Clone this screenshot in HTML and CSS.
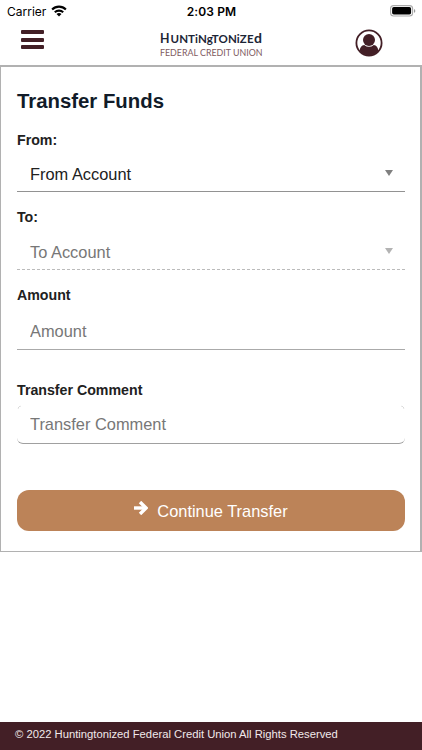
FILE: index.html
```html
<!DOCTYPE html>
<html lang="en">

<head>
    <meta charset="utf-8">
    <meta name="viewport" content="width=device-width, initial-scale=1">
    <title>Transfer Funds</title>
    <link rel="stylesheet" href="styles.css">
</head>

<body>
    <!-- Status bar -->
    <div class="status">
        <div class="carrier">
            <span>Carrier</span>
            <svg width="16" height="12" viewBox="0 0 16 12" fill="none" stroke="#000" stroke-width="2.1">
                <path d="M1.1 4.5a9.8 9.8 0 0 1 13.8 0" />
                <path d="M3.8 7.3a6 6 0 0 1 8.4 0" />
                <path d="M8 11.6L5.5 9.1a3.6 3.6 0 0 1 5 0z" fill="#000" stroke="none" />
            </svg>
        </div>
        <div class="time">2:03 PM</div>
        <div class="battery">
            <svg width="26" height="12" viewBox="0 0 26 12">
                <rect x="0.6" y="0.6" width="22" height="10.4" rx="3" fill="#fff" stroke="#aaa" stroke-width="1.1" />
                <rect x="2.1" y="2.1" width="19" height="7.4" rx="1.7" />
                <path d="M24 4v3.8q1.3-.5 1.3-1.9T24 4z" fill="#999" />
            </svg>
        </div>
    </div>

    <!-- Header -->
    <header class="header">
        <button class="menu" aria-label="Menu">
            <span></span>
            <span></span>
            <span></span>
        </button>
        <svg class="logo" width="104" height="30" viewBox="0 0 104 30">
            <text class="logo-name" x="0" y="13.5"><tspan class="big" textLength="9.5" lengthAdjust="spacingAndGlyphs">H</tspan><tspan x="10.5" textLength="83" lengthAdjust="spacing">UNTiNgTONiZE</tspan><tspan class="tall" x="94">d</tspan></text>
            <text class="logo-sub" x="0" y="27" textLength="102.5" lengthAdjust="spacingAndGlyphs">FEDERAL CREDIT UNION</text>
        </svg>
        <button class="user" aria-label="Account">
            <svg width="28" height="28" viewBox="0 0 28 28">
                <circle cx="14" cy="14" r="12.6" fill="#fff" stroke="#431f26" stroke-width="1.8" />
                <circle cx="14" cy="11" r="6" fill="#431f26" />
                <path d="M4.6 22C5 18 6.6 16.3 9.2 15.9q4.8 3.9 9.6 0c2.6.4 4.2 2.1 4.6 6.1a12.5 12.5 0 0 1-18.8 0z" fill="#431f26" />
            </svg>
        </button>
    </header>

    <!-- Transfer Form -->
    <form class="card">
        <h1>Transfer Funds</h1>

        <label for="from">From:</label>
        <div class="select" id="from">
            <span>From Account</span>
            <i class="arrow"></i>
        </div>

        <label for="to">To:</label>
        <div class="select disabled" id="to">
            <span>To Account</span>
            <i class="arrow"></i>
        </div>

        <label for="amount">Amount</label>
        <input class="amount" type="text" id="amount" placeholder="Amount">

        <label for="comment">Transfer Comment</label>
        <input class="comment" type="text" id="comment" placeholder="Transfer Comment">

        <button type="submit" class="submit">
            <svg width="14" height="14" viewBox="0 0 14 14" fill="none" stroke="#fff" stroke-width="3.4">
                <path d="M0 7h11.5" />
                <path d="M6 1l6 6-6 6" />
            </svg>
            <span>Continue Transfer</span>
        </button>
    </form>

    <footer class="footer">© 2022 Huntingtonized Federal Credit Union All Rights Reserved</footer>
</body>

</html>
```
FILE: styles.css
```css
* {
    box-sizing: border-box;
}

body {
    font-family: "Liberation Sans", Arial, sans-serif;
    margin: 0;
    height: 100vh;
    display: flex;
    flex-direction: column;
    background-color: #fff;
    color: #212121;
    overflow: hidden;
}

button {
    font-family: inherit;
    background: none;
    border: none;
    padding: 0;
    cursor: pointer;
}

svg {
    display: block;
}

.status {
    display: grid;
    grid-template-columns: 1fr auto 1fr;
    align-items: center;
    height: 22px;
    padding: 0 6px 0 7px;
    font-family: Inter, sans-serif;
    font-size: 12px;
    color: #000;
}

.carrier {
    display: flex;
    align-items: center;
    gap: 5px;
}

.time {
    font-weight: 600;
    letter-spacing: 0.1px;
}

.battery {
    justify-self: end;
}

.header {
    display: flex;
    justify-content: space-between;
    height: 43px;
    padding: 7px 39px 0 21px;
}

.menu {
    display: flex;
    flex-direction: column;
    gap: 3.5px;
    width: 23px;
    padding-top: 1px;
}

.menu span {
    height: 4px;
    width: 23px;
    border-radius: 1px;
    background-color: #431f26;
}

.logo {
    overflow: visible;
    margin-left: 24px;
}

.logo-name {
    font-family: Lato, sans-serif;
    font-weight: 700;
    font-size: 11.5px;
    fill: #1c2536;
}

.logo-name .big,
.logo-name .tall {
    font-size: 14px;
}

.logo-sub {
    font-family: Lato, sans-serif;
    font-size: 10px;
    fill: #805b5f;
}

.user {
    align-self: flex-start;
}

.card {
    border: 1px solid #b1b1b1;
    border-width: 2px 2px 1px 1px;
    height: 487px;
    padding: 20px 15px 0 16px;
    display: flex;
    flex-direction: column;
}

h1 {
    margin: 0 0 16px;
    font-size: 20.35px;
    line-height: 28px;
    color: #111b29;
}

label {
    font-size: 14.2px;
    font-weight: bold;
    line-height: 18px;
}

.select {
    display: flex;
    justify-content: space-between;
    align-items: center;
    height: 43px;
    margin-bottom: 16px;
    padding: 8px 12px 0 13px;
    border-bottom: 1px solid #929292;
    font-size: 16.4px;
}

.arrow {
    margin-bottom: 3px;
    border: 4px solid transparent;
    border-top: 6px solid #808080;
    border-bottom: 0;
}

.select.disabled {
    height: 44px;
    padding-top: 9px;
    color: #777;
    border-bottom: 1px dashed #bbb;
}

.disabled .arrow {
    border-top-color: #b3b3b3;
}

input {
    width: 100%;
    border: 0 solid #a0a0a0;
    outline: none;
    padding: 0 13px;
    font-family: inherit;
    font-size: 16.4px;
    background: #fff;
}

input::placeholder {
    color: #777;
}

.amount {
    height: 46px;
    padding-top: 9px;
    border-bottom: 1px solid #aaa;
    margin-bottom: 31px;
}

/* only the rounded corners show at the top of the comment box */
.comment {
    height: 39px;
    margin: 6px 0 46px;
    padding-top: 1px;
    border-bottom: 1px solid #a0a0a0;
    border-radius: 6px;
    background:
        radial-gradient(circle at 6px 6px, transparent 5px, #bbb 5.5px, transparent 6.2px) left top / 4px 4px no-repeat,
        radial-gradient(circle at -2px 6px, transparent 5px, #bbb 5.5px, transparent 6.2px) right top / 4px 4px no-repeat;
}

.submit {
    display: flex;
    justify-content: center;
    height: 41px;
    border-radius: 12px;
    background-color: #bc8358;
    color: #fff;
    font-size: 16.4px;
    line-height: 42px;
    gap: 9px;
}

.submit svg {
    margin-top: 11px;
}

.footer {
    margin-top: auto;
    height: 28px;
    padding-left: 15px;
    background-color: #431f26;
    color: #f1e9ea;
    font-size: 11.25px;
    line-height: 25px;
}
```
